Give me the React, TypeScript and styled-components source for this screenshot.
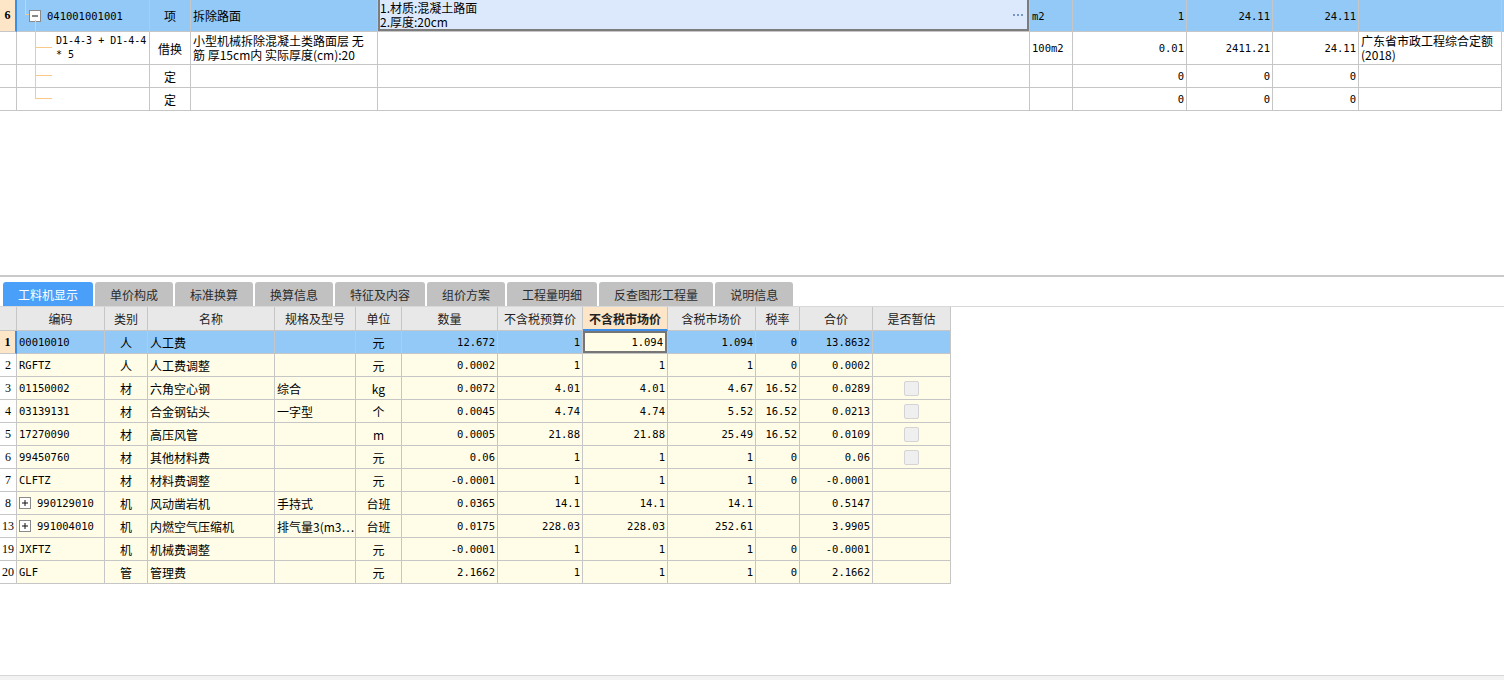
import React from "react";
import styled, { createGlobalStyle } from "styled-components";

const GlobalStyle = createGlobalStyle`
  html, body {
    margin: 0;
    background: #fff;
    font-family: "Noto Sans CJK SC", "Liberation Sans", sans-serif;
    font-size: 12px;
    color: #000;
  }
  * { box-sizing: border-box; }
`;

const BLUE_ROW = "#93c9f6";
const CREAM = "#fffde8";
const PEACH = "#fde6c8";
const LINE = "#c6c6c6";
const STRIPE = "#3b8eea";

const topCols = "17px 133px 41px 187px 652px 43px 114px 86px 86px 143px";
const lowCols = "17px 88px 43px 127px 81px 46px 96px 85px 85px 88px 44px 73px 78px";

const Page = styled.div`
  width: 1504px;
  height: 680px;
  display: flex;
  flex-direction: column;
  overflow: hidden;
`;

const UpperPane = styled.div`
  height: 275px;
  flex: none;
`;

const Splitter = styled.div`
  height: 2px;
  flex: none;
  background: #c9c9c9;
`;

const LowerPane = styled.div`
  flex: 1;
  display: flex;
  flex-direction: column;
`;

const StatusBar = styled.div`
  height: 5px;
  flex: none;
  border-top: 1px solid #d6d6d6;
  background: #f2f2f2;
`;

const GridRow = styled.div<{ $cols: string; $h: number; $bg?: string }>`
  display: grid;
  grid-template-columns: ${(p) => p.$cols};
  height: ${(p) => p.$h}px;
  background: ${(p) => p.$bg || "#fff"};
`;

const Cell = styled.div<{ $align?: "left" | "center" | "right"; $mono?: boolean; $pl?: number }>`
  position: relative;
  display: flex;
  align-items: center;
  justify-content: ${(p) =>
    p.$align === "center" ? "center" : p.$align === "right" ? "flex-end" : "flex-start"};
  padding: 0 2px 0 ${(p) => (p.$pl !== undefined ? p.$pl : 2)}px;
  border-right: 1px solid ${LINE};
  border-bottom: 1px solid ${LINE};
  white-space: nowrap;
  overflow: hidden;
  font-family: ${(p) =>
    p.$mono ? `"DejaVu Sans Mono", "Noto Sans CJK SC", monospace` : "inherit"};
  font-size: ${(p) => (p.$mono ? "10.5px" : "12px")};
`;

const TreeCell = styled(Cell)`
  padding-right: 0;
  font-size: 10px;
`;

const IndexCell = styled(Cell)<{ $sel?: boolean }>`
  justify-content: center;
  padding: 0;
  background: ${(p) => (p.$sel ? PEACH : "#fff")};
  font-weight: ${(p) => (p.$sel ? 700 : 400)};
  font-family: "Liberation Serif", "Noto Sans CJK SC", serif;
  font-size: 12px;
  border-right: ${(p) => (p.$sel ? `2px solid ${STRIPE}` : `1px solid ${LINE}`)};
`;

const Lines = styled.div`
  display: flex;
  flex-direction: column;
  line-height: 14px;
`;

const FeatureEditor = styled(Cell)`
  background: #dce9fc;
  box-shadow: inset 2px 0 #7c7c7c, inset -2px 0 #7c7c7c, inset 0 -2px #7c7c7c;
  justify-content: space-between;
  align-items: flex-start;
  padding: 1px 5px 0 2px;
`;

const DotsIcon = () => (
  <svg width="11" height="2" viewBox="0 0 11 2" style={{ marginTop: 13 }}>
    <rect x="0" y="0" width="2" height="2" fill="#7896c4" />
    <rect x="4" y="0" width="2" height="2" fill="#7896c4" />
    <rect x="8" y="0" width="2" height="2" fill="#7896c4" />
  </svg>
);

const TreeSvg = styled.svg`
  position: absolute;
  left: 0;
  top: 0;
`;

const TabBar = styled.div`
  display: flex;
  gap: 2px;
  padding: 5px 0 0 3px;
  height: 30px;
  flex: none;
  border-bottom: 1px solid #d8d8d8;
`;

const Tab = styled.div<{ $active?: boolean }>`
  height: 24px;
  padding: 0 15px;
  display: flex;
  align-items: center;
  border-radius: 3px 3px 0 0;
  background: ${(p) => (p.$active ? "#4a9ff8" : "#c1c1c1")};
  color: ${(p) => (p.$active ? "#fff" : "#2b2b2b")};
`;

const LowGrid = styled.div`
  width: 951px;
`;

const HeadCell = styled(Cell)<{ $hot?: boolean }>`
  justify-content: center;
  background: ${(p) => (p.$hot ? PEACH : "#e8e8e8")};
  font-weight: ${(p) => (p.$hot ? 700 : 400)};
  color: #222;
  border-bottom: ${(p) => (p.$hot ? `2px solid ${STRIPE}` : `1px solid ${LINE}`)};
`;

const EditCell = styled(Cell)`
  background: ${CREAM};
  box-shadow: inset 0 0 0 2px #767676;
  padding-right: 4px;
`;

const Check = styled.span`
  width: 15px;
  height: 15px;
  border: 1px solid #d4d4d4;
  border-radius: 2px;
  background: #efefef;
`;

const ExpandIcon = ({ minus }: { minus?: boolean }) => (
  <svg width="12" height="12" viewBox="0 0 12 12" style={{ marginRight: 6, flex: "none" }}>
    <rect x="0.5" y="0.5" width="11" height="11" fill="#fff" stroke="#8a8a8a" />
    <line x1="3" y1="6" x2="9" y2="6" stroke="#111" />
    {!minus && <line x1="6" y1="3" x2="6" y2="9" stroke="#111" />}
  </svg>
);

const TREE = "#f9c98c";

const topRows = [
  { kind: "借换", name: ["小型机械拆除混凝土类路面层 无", "筋 厚15cm内  实际厚度(cm):20"], code: ["D1-4-3 + D1-4-4", "* 5"], unit: "100m2", qty: "0.01", price: "2411.21", total: "24.11", note: ["广东省市政工程综合定额", "(2018)"], h: 33, branchY: 15.5, last: false },
  { kind: "定", name: [], code: [], unit: "", qty: "0", price: "0", total: "0", note: [], h: 23, branchY: 10.5, last: false },
  { kind: "定", name: [], code: [], unit: "", qty: "0", price: "0", total: "0", note: [], h: 23, branchY: 10.5, last: true },
];

type LowRow = {
  n: string; code: string; type: string; name: string; spec: string; unit: string;
  qty: string; bp: string; mp: string; tp: string; tax: string; total: string;
  chk?: boolean; plus?: boolean; sel?: boolean;
};

const lowRows: LowRow[] = [
  { n: "1", code: "00010010", type: "人", name: "人工费", spec: "", unit: "元", qty: "12.672", bp: "1", mp: "1.094", tp: "1.094", tax: "0", total: "13.8632", sel: true },
  { n: "2", code: "RGFTZ", type: "人", name: "人工费调整", spec: "", unit: "元", qty: "0.0002", bp: "1", mp: "1", tp: "1", tax: "0", total: "0.0002" },
  { n: "3", code: "01150002", type: "材", name: "六角空心钢", spec: "综合", unit: "kg", qty: "0.0072", bp: "4.01", mp: "4.01", tp: "4.67", tax: "16.52", total: "0.0289", chk: true },
  { n: "4", code: "03139131", type: "材", name: "合金钢钻头", spec: "一字型", unit: "个", qty: "0.0045", bp: "4.74", mp: "4.74", tp: "5.52", tax: "16.52", total: "0.0213", chk: true },
  { n: "5", code: "17270090", type: "材", name: "高压风管", spec: "", unit: "m", qty: "0.0005", bp: "21.88", mp: "21.88", tp: "25.49", tax: "16.52", total: "0.0109", chk: true },
  { n: "6", code: "99450760", type: "材", name: "其他材料费", spec: "", unit: "元", qty: "0.06", bp: "1", mp: "1", tp: "1", tax: "0", total: "0.06", chk: true },
  { n: "7", code: "CLFTZ", type: "材", name: "材料费调整", spec: "", unit: "元", qty: "-0.0001", bp: "1", mp: "1", tp: "1", tax: "0", total: "-0.0001" },
  { n: "8", code: "990129010", type: "机", name: "风动凿岩机", spec: "手持式", unit: "台班", qty: "0.0365", bp: "14.1", mp: "14.1", tp: "14.1", tax: "", total: "0.5147", plus: true },
  { n: "13", code: "991004010", type: "机", name: "内燃空气压缩机", spec: "排气量3(m3⋯", unit: "台班", qty: "0.0175", bp: "228.03", mp: "228.03", tp: "252.61", tax: "", total: "3.9905", plus: true },
  { n: "19", code: "JXFTZ", type: "机", name: "机械费调整", spec: "", unit: "元", qty: "-0.0001", bp: "1", mp: "1", tp: "1", tax: "0", total: "-0.0001" },
  { n: "20", code: "GLF", type: "管", name: "管理费", spec: "", unit: "元", qty: "2.1662", bp: "1", mp: "1", tp: "1", tax: "0", total: "2.1662" },
];

const tabs = ["工料机显示", "单价构成", "标准换算", "换算信息", "特征及内容", "组价方案", "工程量明细", "反查图形工程量", "说明信息"];
const heads = ["", "编码", "类别", "名称", "规格及型号", "单位", "数量", "不含税预算价", "不含税市场价", "含税市场价", "税率", "合价", "是否暂估"];

const App = () => {
  return (
    <Page>
      <GlobalStyle />
      <UpperPane>
        <GridRow $cols={topCols} $h={32} $bg={BLUE_ROW}>
          <IndexCell $sel>6</IndexCell>
          <Cell $mono $pl={12}>
            <TreeSvg width="133" height="31">
              <line x1="8.5" y1="0" x2="8.5" y2="14" stroke={TREE} />
              <line x1="8" y1="14.5" x2="12" y2="14.5" stroke={TREE} />
              <line x1="18.5" y1="20" x2="18.5" y2="31" stroke={TREE} />
            </TreeSvg>
            <ExpandIcon minus />
            041001001001
          </Cell>
          <Cell $align="center">项</Cell>
          <Cell>拆除路面</Cell>
          <FeatureEditor>
            <Lines>
              <span>1.材质:混凝土路面</span>
              <span>2.厚度:20cm</span>
            </Lines>
            <DotsIcon />
          </FeatureEditor>
          <Cell $mono>m2</Cell>
          <Cell $mono $align="right">1</Cell>
          <Cell $mono $align="right">24.11</Cell>
          <Cell $mono $align="right">24.11</Cell>
          <Cell />
        </GridRow>
        {topRows.map((r, i) => (
          <GridRow key={i} $cols={topCols} $h={r.h}>
            <IndexCell />
            <TreeCell $mono $pl={39}>
              <TreeSvg width="133" height={r.h}>
                <line x1="18.5" y1="0" x2="18.5" y2={r.last ? r.branchY + 0.5 : r.h} stroke={TREE} />
                <line x1="18" y1={r.branchY} x2="35" y2={r.branchY} stroke={TREE} />
              </TreeSvg>
              <Lines>
                {r.code.map((c) => (
                  <span key={c}>{c}</span>
                ))}
              </Lines>
            </TreeCell>
            <Cell $align="center">{r.kind}</Cell>
            <Cell>
              <Lines>
                {r.name.map((c) => (
                  <span key={c}>{c}</span>
                ))}
              </Lines>
            </Cell>
            <Cell />
            <Cell $mono>{r.unit}</Cell>
            <Cell $mono $align="right">{r.qty}</Cell>
            <Cell $mono $align="right">{r.price}</Cell>
            <Cell $mono $align="right">{r.total}</Cell>
            <Cell>
              <Lines>
                {r.note.map((c) => (
                  <span key={c}>{c}</span>
                ))}
              </Lines>
            </Cell>
          </GridRow>
        ))}
      </UpperPane>
      <Splitter />
      <LowerPane>
        <TabBar>
          {tabs.map((t, i) => (
            <Tab key={t} $active={i === 0}>
              {t}
            </Tab>
          ))}
        </TabBar>
        <LowGrid>
          <GridRow $cols={lowCols} $h={24} $bg="#e8e8e8">
            {heads.map((h, i) => (
              <HeadCell key={i} $hot={h === "不含税市场价"}>
                {h}
              </HeadCell>
            ))}
          </GridRow>
          {lowRows.map((r) => (
            <GridRow key={r.n} $cols={lowCols} $h={23} $bg={r.sel ? BLUE_ROW : CREAM}>
              <IndexCell $sel={r.sel}>{r.n}</IndexCell>
              <Cell $mono>
                {r.plus && <ExpandIcon />}
                {r.code}
              </Cell>
              <Cell $align="center">{r.type}</Cell>
              <Cell>{r.name}</Cell>
              <Cell>{r.spec}</Cell>
              <Cell $align="center">{r.unit}</Cell>
              <Cell $mono $align="right">{r.qty}</Cell>
              <Cell $mono $align="right">{r.bp}</Cell>
              {r.sel ? (
                <EditCell $mono $align="right">{r.mp}</EditCell>
              ) : (
                <Cell $mono $align="right">{r.mp}</Cell>
              )}
              <Cell $mono $align="right">{r.tp}</Cell>
              <Cell $mono $align="right">{r.tax}</Cell>
              <Cell $mono $align="right">{r.total}</Cell>
              <Cell $align="center">{r.chk && <Check />}</Cell>
            </GridRow>
          ))}
        </LowGrid>
      </LowerPane>
      <StatusBar />
    </Page>
  );
};

export default App;
